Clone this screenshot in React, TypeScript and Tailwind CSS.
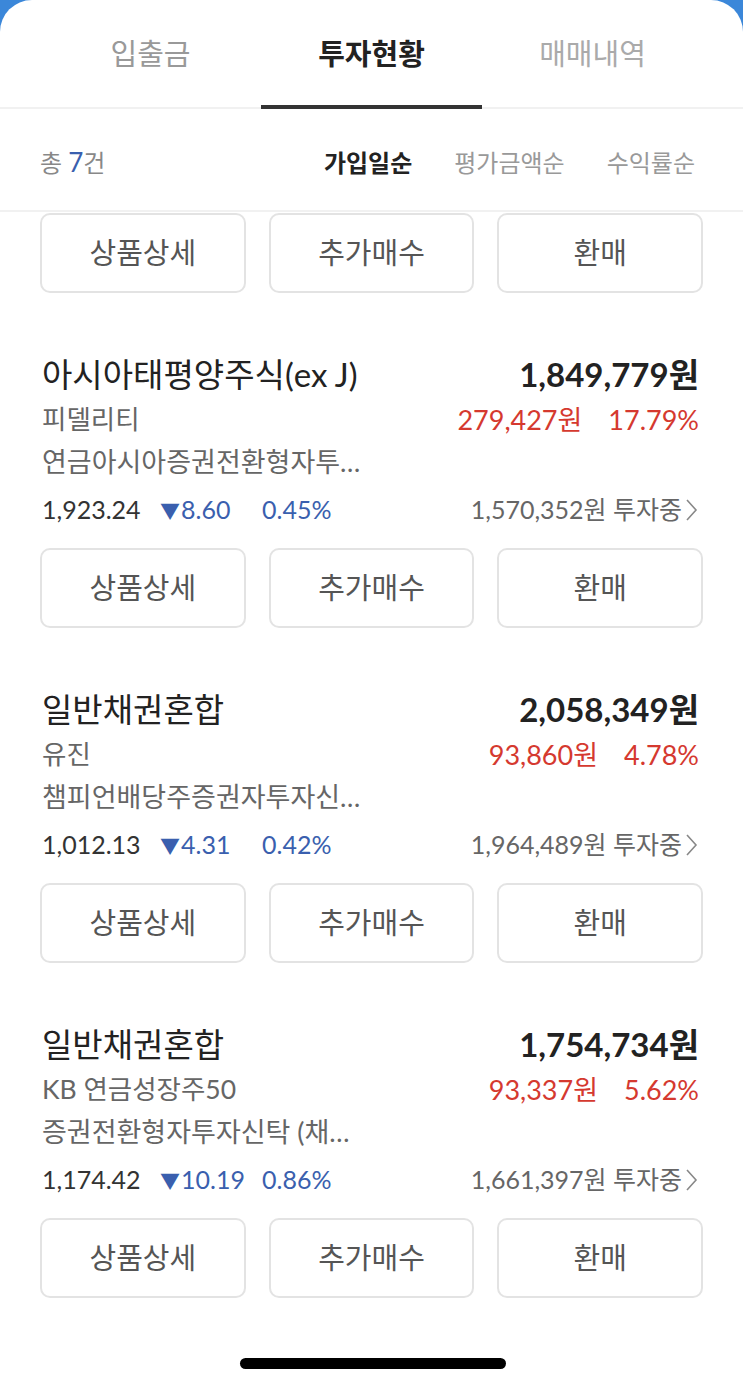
import React from 'react';

const font = { fontFamily: "Lato, 'Noto Sans CJK KR', sans-serif" };

type Fund = {
    title: string;
    amount: string;
    company: string;
    gain: string;
    rate: string;
    desc: string;
    price: string;
    change: string;
    changeRate: string;
    invested: string;
};

const funds: Fund[] = [
    {
        title: '아시아태평양주식(ex J)',
        amount: '1,849,779원',
        company: '피델리티',
        gain: '279,427원',
        rate: '17.79%',
        desc: '연금아시아증권전환형자투…',
        price: '1,923.24',
        change: '8.60',
        changeRate: '0.45%',
        invested: '1,570,352원 투자중',
    },
    {
        title: '일반채권혼합',
        amount: '2,058,349원',
        company: '유진',
        gain: '93,860원',
        rate: '4.78%',
        desc: '챔피언배당주증권자투자신…',
        price: '1,012.13',
        change: '4.31',
        changeRate: '0.42%',
        invested: '1,964,489원 투자중',
    },
    {
        title: '일반채권혼합',
        amount: '1,754,734원',
        company: 'KB 연금성장주50',
        gain: '93,337원',
        rate: '5.62%',
        desc: '증권전환형자투자신탁 (채…',
        price: '1,174.42',
        change: '10.19',
        changeRate: '0.86%',
        invested: '1,661,397원 투자중',
    },
];

function ActionButtons() {
    return (
        <div className="grid grid-cols-3 gap-[23px] px-10">
            {['상품상세', '추가매수', '환매'].map((label) => (
                <button
                    key={label}
                    className="h-[80px] rounded-[10px] border-2 border-[#e3e3e3] bg-white text-[29px] text-[#555]"
                >
                    {label}
                </button>
            ))}
        </div>
    );
}

function FundCard({ fund }: { fund: Fund }) {
    return (
        <div className="pt-[62px]">
            <div className="pl-[42px] pr-[44px]">
                <div className="flex items-center justify-between h-[40px]">
                    <span className="text-[33px] text-[#222]">{fund.title}</span>
                    <span className="text-[33px] font-bold text-[#222]">{fund.amount}</span>
                </div>
                <div className="flex items-center justify-between h-[40px] mt-[5px]">
                    <span className="text-[26.5px] text-[#666]">{fund.company}</span>
                    <span className="flex gap-[26px] text-[27px] text-[#d5392f]">
                        <span>{fund.gain}</span>
                        <span>{fund.rate}</span>
                    </span>
                </div>
                <div className="flex items-center h-[40px] mt-[2px]">
                    <span className="text-[27px] text-[#666]">{fund.desc}</span>
                </div>
                <div className="flex items-center justify-between h-[40px] mt-[8px] text-[25px]">
                    <div className="flex items-center">
                        <span className="w-[118px] text-[#333]">{fund.price}</span>
                        <span className="w-[102px] text-[#3a5fae]">
                            <span className="text-[20px] mr-[1px]">▼</span>
                            {fund.change}
                        </span>
                        <span className="text-[#3a5fae]">{fund.changeRate}</span>
                    </div>
                    <div className="flex items-center gap-[2px] text-[#666]">
                        <span>{fund.invested}</span>
                        <svg width="15" height="26" viewBox="0 0 15 26" fill="none">
                            <polyline points="3,3 12,13 3,23" stroke="#888" strokeWidth="1.6" />
                        </svg>
                    </div>
                </div>
            </div>
            <div className="mt-[18px]">
                <ActionButtons />
            </div>
        </div>
    );
}

export default function App() {
    return (
        <div className="relative w-full h-[1385px] overflow-hidden bg-[#3b87d9]" style={font}>
            <div className="h-full bg-white rounded-t-[32px] flex flex-col">
                <div className="grid grid-cols-3 px-10 h-[109px] border-b-2 border-[#f1f1f1]">
                    <div className="flex items-center justify-center text-[29px] text-[#999]">입출금</div>
                    <div className="relative flex items-center justify-center text-[29px] font-bold text-[#222]">
                        투자현황
                        <div className="absolute left-0 right-0 -bottom-[2px] h-[4px] bg-[#333]" />
                    </div>
                    <div className="flex items-center justify-center text-[29px] text-[#aaa]">매매내역</div>
                </div>

                <div className="flex items-center justify-between h-[103px] pt-[6px] pl-[40px] pr-[48px] border-b-2 border-[#f1f1f1]">
                    <div className="text-[24px] text-[#888]">
                        총 <span className="text-[26px] text-[#3a5fae]">7</span>건
                    </div>
                    <div className="flex gap-[42px] text-[24px]">
                        <span className="font-bold text-[#222]">가입일순</span>
                        <span className="text-[#999]">평가금액순</span>
                        <span className="text-[#999]">수익률순</span>
                    </div>
                </div>

                <div className="flex-1 overflow-hidden">
                    <div className="pt-[1px]">
                        <ActionButtons />
                    </div>
                    {funds.map((f, i) => (
                        <FundCard key={i} fund={f} />
                    ))}
                </div>
            </div>

            <div className="absolute bottom-[16px] left-[240px] w-[266px] h-[11px] rounded-full bg-black" />
        </div>
    );
}
